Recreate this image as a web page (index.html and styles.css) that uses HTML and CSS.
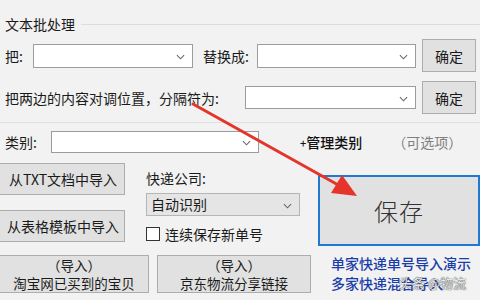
FILE: index.html
```html
<!DOCTYPE html>
<html lang="zh">
<head>
<meta charset="utf-8">
<link rel="stylesheet" href="styles.css">
</head>
<body>
<div class="page">
  <div class="title"><span>文本批处理</span><i class="rule"></i></div>

  <div class="row row1">
    <span class="lbl l-ba">把:</span>
    <div class="combo c1"><svg class="chev" viewBox="0 0 10 6"><path d="M1 1l4 4 4-4"/></svg></div>
    <span class="lbl l-th">替换成:</span>
    <div class="combo c2"><svg class="chev" viewBox="0 0 10 6"><path d="M1 1l4 4 4-4"/></svg></div>
    <button class="btn ok">确定</button>
  </div>

  <div class="row row2">
    <span class="lbl l-swap">把两边的内容对调位置，分隔符为:</span>
    <div class="combo c3"><svg class="chev" viewBox="0 0 10 6"><path d="M1 1l4 4 4-4"/></svg></div>
    <button class="btn ok">确定</button>
  </div>

  <div class="sep"></div>

  <div class="row row3">
    <span class="lbl l-cat">类别:</span>
    <div class="combo c4"><svg class="chev" viewBox="0 0 10 6"><path d="M1 1l4 4 4-4"/></svg></div>
    <span class="manage"><small>+</small>管理类别</span>
    <span class="opt">（可选项）</span>
  </div>

  <div class="lower">
    <div class="col-left">
      <button class="btn imp">从TXT文档中导入</button>
      <button class="btn imp">从表格模板中导入</button>
    </div>
    <div class="col-mid">
      <div class="lbl kd">快递公司:</div>
      <div class="combo ro">自动识别<svg class="chev" viewBox="0 0 10 6"><path d="M1 1l4 4 4-4"/></svg></div>
      <label class="chk"><span class="box"></span>连续保存新单号</label>
    </div>
    <button class="btn save">保存</button>
  </div>

  <div class="bottom">
    <button class="btn big"><span class="ln">（导入）</span><span class="ln">淘宝网已买到的宝贝</span></button>
    <button class="btn big b2"><span class="ln">（导入）</span><span class="ln">京东物流分享链接</span></button>
    <div class="links">
      <a class="link">单家快递单号导入演示</a>
      <a class="link">多家快递混合导入</a>
      <span class="wm">头条 @物流</span>
    </div>
  </div>

  <svg class="arrow" viewBox="0 0 480 300" width="480" height="300">
    <line x1="193" y1="104" x2="340" y2="186" stroke="#e5352b" stroke-width="3" stroke-linecap="round"/>
    <polygon points="357,196 331,193 342,175" fill="#e5352b"/>
  </svg>
</div>
</body>
</html>
```
FILE: styles.css
```css
* { box-sizing: border-box; }
html, body {
  margin: 0;
  padding: 0;
  width: 480px;
  height: 300px;
  overflow: hidden;
  background: #f2f2f2;
}
body {
  font-family: "Noto Sans CJK SC", "Microsoft YaHei", sans-serif;
  font-size: 14px;
  color: #1a1a1a;
}
.page {
  position: relative;
  width: 480px;
  height: 300px;
  overflow: hidden;
}
.title {
  display: flex;
  align-items: center;
  height: 22px;
  margin-top: 13px;
  padding-left: 5px;
  line-height: 22px;
}
.title .rule {
  flex: 1;
  height: 1px;
  background: #dcdcdc;
  margin-left: 6px;
}
.row {
  display: flex;
  align-items: center;
  padding-left: 5px;
}
.row1 { margin-top: 4px; height: 33px; }
.row2 { margin-top: 9px; height: 33px; }
.row3 { margin-top: 8px; height: 22px; }
.lbl { white-space: nowrap; line-height: 18px; }
.l-ba { width: 28px; }
.l-th { width: 54px; margin-left: 10px; }
.l-swap { width: 240px; }
.l-cat { width: 46px; }

.combo {
  position: relative;
  background: #fff;
  border: 1px solid #9c9c9c;
  height: 24px;
}
.chev {
  position: absolute;
  right: 7px;
  top: 50%;
  width: 9px;
  height: 6px;
  margin-top: -2px;
  fill: none;
  stroke: #666;
  stroke-width: 1.2;
}
.c1 { width: 160px; }
.c2 { width: 159px; }
.c3 { width: 171px; height: 23px; }
.c4 { width: 208px; height: 22px; }

.btn {
  font-family: inherit;
  font-size: 14px;
  color: #1a1a1a;
  background: #e1e1e1;
  border: 1px solid #adadad;
  padding: 0;
  margin: 0;
}
.ok {
  width: 54px;
  height: 33px;
  margin-left: 6px;
}
.manage {
  margin-left: 41px;
  color: #111;
  font-weight: 500;
}
.manage small { font-size: 11px; }
.opt {
  margin-left: 30px;
  color: #808080;
}
.sep {
  height: 1px;
  background: #e0e0e0;
  margin-top: 8px;
}

.lower {
  display: flex;
  align-items: flex-start;
  margin-top: 10px;
  height: 83px;
}
.col-left {
  display: flex;
  flex-direction: column;
  gap: 15px;
  width: 125px;
}
.imp {
  width: 125px;
  height: 32px;
  border-left: none;
  padding-left: 2px;
}
.col-mid {
  display: flex;
  flex-direction: column;
  margin-left: 21px;
  width: 154px;
}
.kd { margin-top: 6px; height: 18px; }
.combo.ro {
  margin-top: 6px;
  height: 23px;
  width: 154px;
  background: #e5e5e5;
  border-color: #b5b5b5;
  line-height: 21px;
  padding-left: 4px;
}
.chk {
  display: flex;
  align-items: center;
  margin-top: 9px;
  height: 18px;
  white-space: nowrap;
}
.box {
  width: 14px;
  height: 14px;
  background: #fff;
  border: 1px solid #333;
  margin-right: 5px;
}
.save {
  margin-left: 18px;
  margin-top: 12px;
  width: 170px;
  height: 71px;
  border: 2px solid #1f78d1;
  background: #e1e1e1;
  font-size: 24px;
  font-weight: 300;
  color: #333;
  letter-spacing: 1px;
}

.bottom {
  display: flex;
  align-items: flex-start;
  margin-top: 9px;
}
.big {
  display: flex;
  flex-direction: column;
  align-items: center;
  justify-content: center;
  width: 149px;
  height: 38px;
  border-left: none;
  font-size: 13.5px;
}
.big .ln {
  display: block;
  height: 18px;
  line-height: 18px;
  white-space: nowrap;
}
.big.b2 {
  width: 154px;
  margin-left: 8px;
  border-left: 1px solid #adadad;
}
.links {
  position: relative;
  display: flex;
  flex-direction: column;
  margin-left: 20px;
  margin-top: -2px;
}
.link {
  color: #1a3da8;
  font-weight: 500;
  line-height: 20px;
  white-space: nowrap;
}
.wm {
  position: absolute;
  left: 68px;
  top: 20px;
  line-height: 20px;
  font-size: 13px;
  color: rgba(255,255,255,0.9);
  text-shadow: 0 0 1px #444, 0 0 1px #444;
  white-space: nowrap;
}
.arrow {
  position: absolute;
  left: 0;
  top: 0;
  pointer-events: none;
}
```
